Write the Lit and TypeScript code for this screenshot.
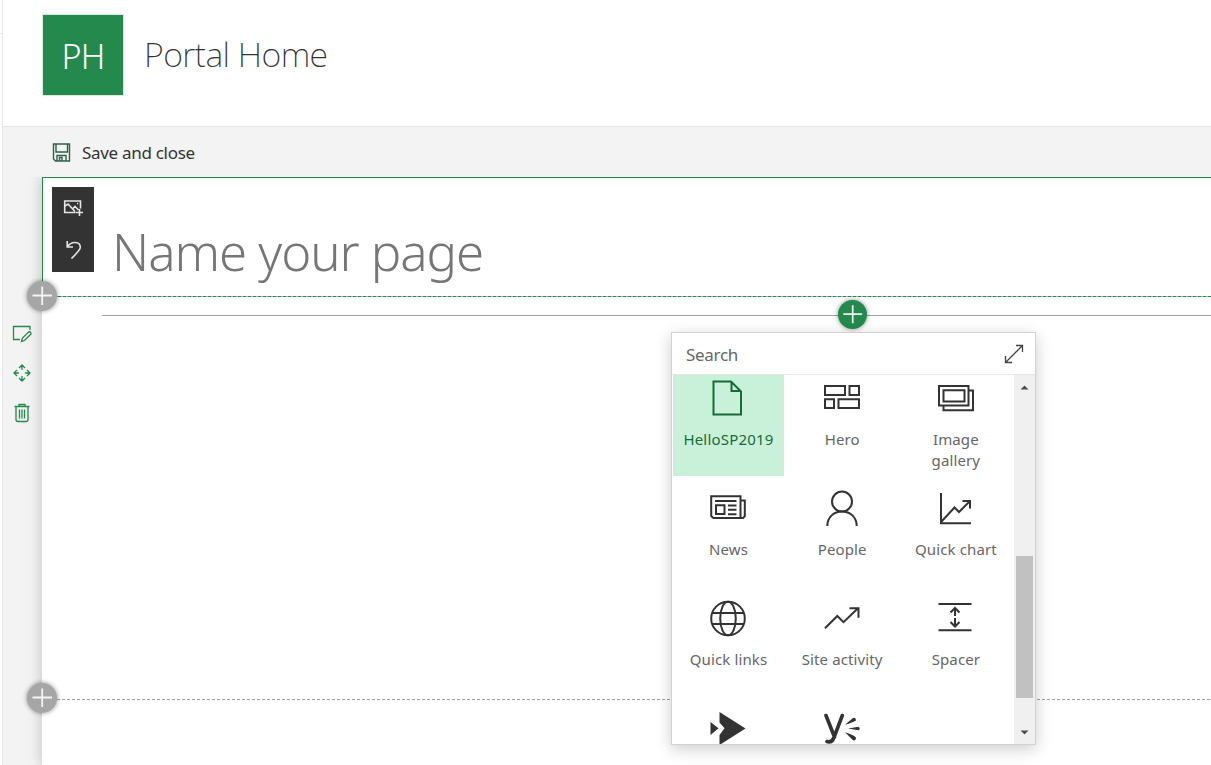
import { LitElement, html, css, svg } from "lit";
import { customElement, property } from "lit/decorators.js";

const icons: Record<string, unknown> = {
  page: svg`<path d="M3.5 1.5H21L31 11.5V34.5H3.5Z M21.5 2V11H30.5"/>`,
  hero: svg`<path d="M1 6H21V15H1Z M25.5 6H35V15H25.5Z M1 19.2H10V28H1Z M14.5 19.2H35V28H14.5Z"/>`,
  gallery: svg`<path d="M1 6H30.5V25.5H1Z M5.5 10.2H26.5V21.5H5.5Z M31 10.5H35V30.2H5.5V26"/>`,
  news: svg`<path d="M1.2 6.3H30.5V28H3.5L1.2 26Z M30.5 10.5H34.8V26.3L33 28H28.5 M5 11H26.5 M6 15.3H14.5V24H6Z M18 15.5H26.5 M18 19.8H26.5 M18 24.2H26.5"/>`,
  people: svg`<circle cx="18" cy="11.5" r="10"/><path d="M3.3 36C3.3 27 10 21.5 18 21.5S32.7 27 32.7 36"/>`,
  chart: svg`<path d="M3 3V33.2H33 M3.5 31.5L16.5 17.5L21 22L32 11 M24.5 11H32V18.5"/>`,
  globe: svg`<circle cx="18" cy="18.5" r="16.8"/><ellipse cx="18" cy="18.5" rx="7.8" ry="16.8"/><path d="M2.5 13H33.5 M2.5 24H33.5"/>`,
  activity: svg`<path d="M1 28.3L13.3 16L19.5 22.2L34 8.2 M25.5 8.3H34.5V17.8"/>`,
  spacer: svg`<path d="M.5 4H33.5 M.5 30.2H33.5 M17 7.8V16 M12.5 12.5L17 8L21.5 12.5 M17 18V26.5 M12.5 22L17 26.5L21.5 22"/>`,
  stream: svg`<path class="solid" d="M.5 12L8.5 18.2L.5 25Z M9.5 2L35.5 18.5L9.5 35V25L14.5 18.2L9.5 12.5Z"/>`,
  yammer: svg`<path class="thick" d="M2 5.5L10.5 27 M18.3 5.5L10 27.5Q8 33 3 31.5"/><path class="solid" d="M21 14.8L29 8Q32 7 32 10.5Q29 12.5 21 14.8Z M24 18.4L34.5 16.7Q37 18.5 34.5 20.3Z M21 22.2Q29 24.5 32 27.5Q32 31 29 30.3Z"/>`,
};

@customElement("add-button")
class AddButton extends LitElement {
  @property({ type: Boolean, reflect: true }) active = false;
  static styles = css`
    :host { display: block; width: 30px; height: 30px; border-radius: 50%; background: #a6a6a6; box-shadow: 0 0 5px rgba(0, 0, 0, .45); }
    :host([active]) { width: 29px; height: 29px; background: #23894c; }
    svg { display: block; width: 100%; height: 100%; fill: none; stroke: #f4f4f4; stroke-width: 1.8; }
  `;
  render() {
    return html`<svg viewBox="0 0 30 30"><path d="M5.5 14.5H25 M15.2 5.5V24" /></svg>`;
  }
}

@customElement("part-tile")
class PartTile extends LitElement {
  @property() icon = "";
  @property() label = "";
  @property({ type: Boolean, reflect: true }) selected = false;
  static styles = css`
    :host { display: flex; flex-direction: column; align-items: center; height: 108px; padding-top: 12px; box-sizing: border-box; color: #666; font-size: 15px; letter-spacing: .12px; line-height: 21px; text-align: center; }
    :host([selected]) { background: #c9f0d9; color: #176b39; }
    svg { width: 36px; height: 36px; flex: none; margin-right: .6px; fill: none; stroke: #333; stroke-width: 2; overflow: visible; }
    :host([selected]) svg { stroke: #176b39; margin-right: 2px; }
    .solid { fill: #333; stroke: none; }
    .thick { stroke-width: 3.6; stroke-linecap: round; }
    .label { margin-top: 13px; max-width: 92px; }
    :host([selected]) .label { letter-spacing: .2px; }
  `;
  render() {
    return html`<svg viewBox="0 0 36 36">${icons[this.icon]}</svg><span class="label">${this.label}</span>`;
  }
}

@customElement("app-root")
class AppRoot extends LitElement {
  static styles = css`
    :host { display: block; height: 765px; overflow: hidden; background: #fff; font-family: "Noto Sans", "Open Sans", sans-serif; color: #333; }
    * { box-sizing: border-box; }
    svg { display: block; fill: none; }
    .shell { display: grid; grid-template-columns: 2px 1fr; height: 100%; }
    .nav { height: 34px; border-bottom: 1px solid #eaeaea; }
    .main { display: flex; flex-direction: column; border-left: 1px solid #e6e6e6; min-width: 0; }
    header { height: 127px; flex: none; border-bottom: 1px solid #e6e6e6; padding: 14px 0 0 39px; display: flex; }
    .logo { width: 82px; height: 82px; border: 1px solid #dcebe2; background: #23894c; color: #fff; font-size: 34px; font-weight: 300; line-height: 82px; text-align: center; letter-spacing: -.7px; }
    h1 { margin: 0 0 0 20px; font-size: 34px; font-weight: 200; letter-spacing: -.55px; line-height: 80px; white-space: nowrap; }
    .bar { height: 50px; flex: none; background: #f3f3f3; display: flex; align-items: center; padding-left: 49px; gap: 11px; font-size: 17px; letter-spacing: -.3px; white-space: nowrap; }
    .bar svg { width: 19px; height: 19px; stroke: #296348; stroke-width: 1.4; }
    .work { flex: 1; display: grid; grid-template-columns: 39px 1fr; background: #f3f3f3; min-height: 0; }
    .tools { display: flex; flex-direction: column; padding: 146px 0 0 8.5px; gap: 20px; }
    .tools svg { width: 20px; height: 20px; stroke: #23894c; stroke-width: 1.3; }
    .canvas { position: relative; background: #fff; box-shadow: -2px 0 12px rgba(0, 0, 0, .17); clip-path: inset(0 0 0 -26px); display: flex; flex-direction: column; min-width: 0; }
    .title { height: 120px; flex: none; border: solid #23894c; border-width: 1px 0 0 1px; background: repeating-linear-gradient(90deg, #23894c 0 3px, #a9b8af 3px 5px) left bottom / 100% 1px no-repeat; display: flex; padding: 9px 0 0 9px; }
    .toolbox { width: 42px; height: 85px; background: #333; display: flex; flex-direction: column; align-items: center; padding: 10px 1px 0 0; gap: 22px; }
    .toolbox svg { width: 20px; height: 20px; stroke: #e5e5e5; stroke-width: 1.6; }
    .name { margin-left: 18px; font-size: 51px; font-weight: 300; letter-spacing: -1.05px; line-height: 70px; padding-top: 29px; color: #767676; white-space: nowrap; }
    .section { height: 403px; flex: none; background: repeating-linear-gradient(90deg, #a0a0a0 0 3px, #fff 3px 5px) left bottom / 100% 1px no-repeat; padding: 18px 0 0 60px; }
    .rule { height: 1px; background: #a3a3a3; }
    add-button { position: absolute; left: -15.5px; }
    .first { top: 104px; }
    .second { top: 506px; }
    .insert { left: 796px; top: 122.5px; }
    .picker { position: absolute; left: 629px; top: 155px; width: 365px; height: 413px; background: #fff; border: 1px solid #d2d2d2; box-shadow: 0 4px 15px rgba(0, 0, 0, .2); display: flex; flex-direction: column; }
    .search { height: 42px; flex: none; border-bottom: 1px solid #e6e6e6; display: flex; justify-content: space-between; align-items: center; padding: 1px 11px 0 14px; font-size: 17px; letter-spacing: -.3px; color: #666; }
    .search svg { width: 20px; height: 20px; stroke: #444; stroke-width: 1.3; }
    .body { flex: 1; display: grid; grid-template-columns: 1fr 21px; min-height: 0; }
    .view { overflow: hidden; }
    .tiles { display: grid; grid-template-columns: repeat(3, 111px); column-gap: 2.7px; row-gap: 2px; margin: -7px 0 0 1px; }
    .scroll { background: #f0f0f0; display: flex; flex-direction: column; align-items: center; padding-right: 1px; }
    .scroll svg { width: 9px; height: 5px; margin: 10px 0 0; fill: #4c4c4c; }
    .thumb { width: 17px; height: 142px; margin: 166px 0 22px; background: #c1c1c1; }
  `;

  private parts = [
    ["page", "HelloSP2019"], ["hero", "Hero"], ["gallery", "Image gallery"],
    ["news", "News"], ["people", "People"], ["chart", "Quick chart"],
    ["globe", "Quick links"], ["activity", "Site activity"], ["spacer", "Spacer"],
    ["stream", ""], ["yammer", ""],
  ];

  render() {
    return html`
      <div class="shell">
        <div class="nav"></div>
        <div class="main">
          <header><div class="logo">PH</div><h1>Portal Home</h1></header>
          <div class="bar">
            <svg viewBox="0 0 19 19"><path d="M1.5 1H17.5V18H3.5L1.5 16Z M4 1V9H15.5V1 M5 18V12.5H14V18 M7.5 18V14.5H10V18" /></svg>
            <span class="save">Save and close</span>
          </div>
          <div class="work">
            <div class="tools">
              <svg viewBox="0 0 20 20"><path d="M8 16.5H1.5V3.5H18V7 M9.5 18.5L10.5 15L16.8 8.8Q18.2 8.5 18.8 9.8L19 11L12.5 17.5Z" /></svg>
              <svg viewBox="0 0 20 20"><path d="M10 2V7 M7 5L10 2L13 5 M10 13V18 M7 15L10 18L13 15 M2 10H7 M5 7L2 10L5 13 M13 10H18 M15 7L18 10L15 13" /></svg>
              <svg viewBox="0 0 20 20"><path d="M2.5 3.5H17.5 M7 3.5V1.5H13V3.5 M4 4V16.5Q4 18.5 6 18.5H14Q16 18.5 16 16.5V4 M7.5 6.5V15.5 M10 6.5V15.5 M12.5 6.5V15.5" /></svg>
            </div>
            <div class="canvas">
              <div class="title">
                <div class="toolbox">
                  <svg viewBox="0 0 20 20"><path d="M12.5 15.5H1.7V4H17.5V11.5 M2 9L5 7L12 14.5 M9.5 12L12 9.5L15.5 13 M16.5 12V19 M13 15.5H20 M14 6.5H15.2" /></svg>
                  <svg viewBox="0 0 20 20"><path d="M4.2 2V8H10 M4.5 7.7C8 2 17.5 2 17.3 8.5C17.2 11 15 13 8.5 19.5" /></svg>
                </div>
                <div class="name">Name your page</div>
              </div>
              <div class="section"><div class="rule"></div></div>
              <add-button class="first"></add-button>
              <add-button class="second"></add-button>
              <add-button class="insert" active></add-button>
              <div class="picker">
                <div class="search"><span>Search</span>
                  <svg viewBox="0 0 20 20"><path d="M1.5 18.5L18.5 1.5 M12 1.5H18.5V8 M1.5 12V18.5H8" /></svg>
                </div>
                <div class="body">
                  <div class="view"><div class="tiles">
                    ${this.parts.map(([icon, label], i) => html`<part-tile .icon=${icon} .label=${label} ?selected=${i === 0}></part-tile>`)}
                  </div></div>
                  <div class="scroll">
                    <svg viewBox="0 0 8 5"><path d="M0 4.5L4 .5L8 4.5Z" /></svg>
                    <div class="thumb"></div>
                    <svg viewBox="0 0 8 5"><path d="M0 .5L4 4.5L8 .5Z" /></svg>
                  </div>
                </div>
              </div>
            </div>
          </div>
        </div>
      </div>`;
  }
}
